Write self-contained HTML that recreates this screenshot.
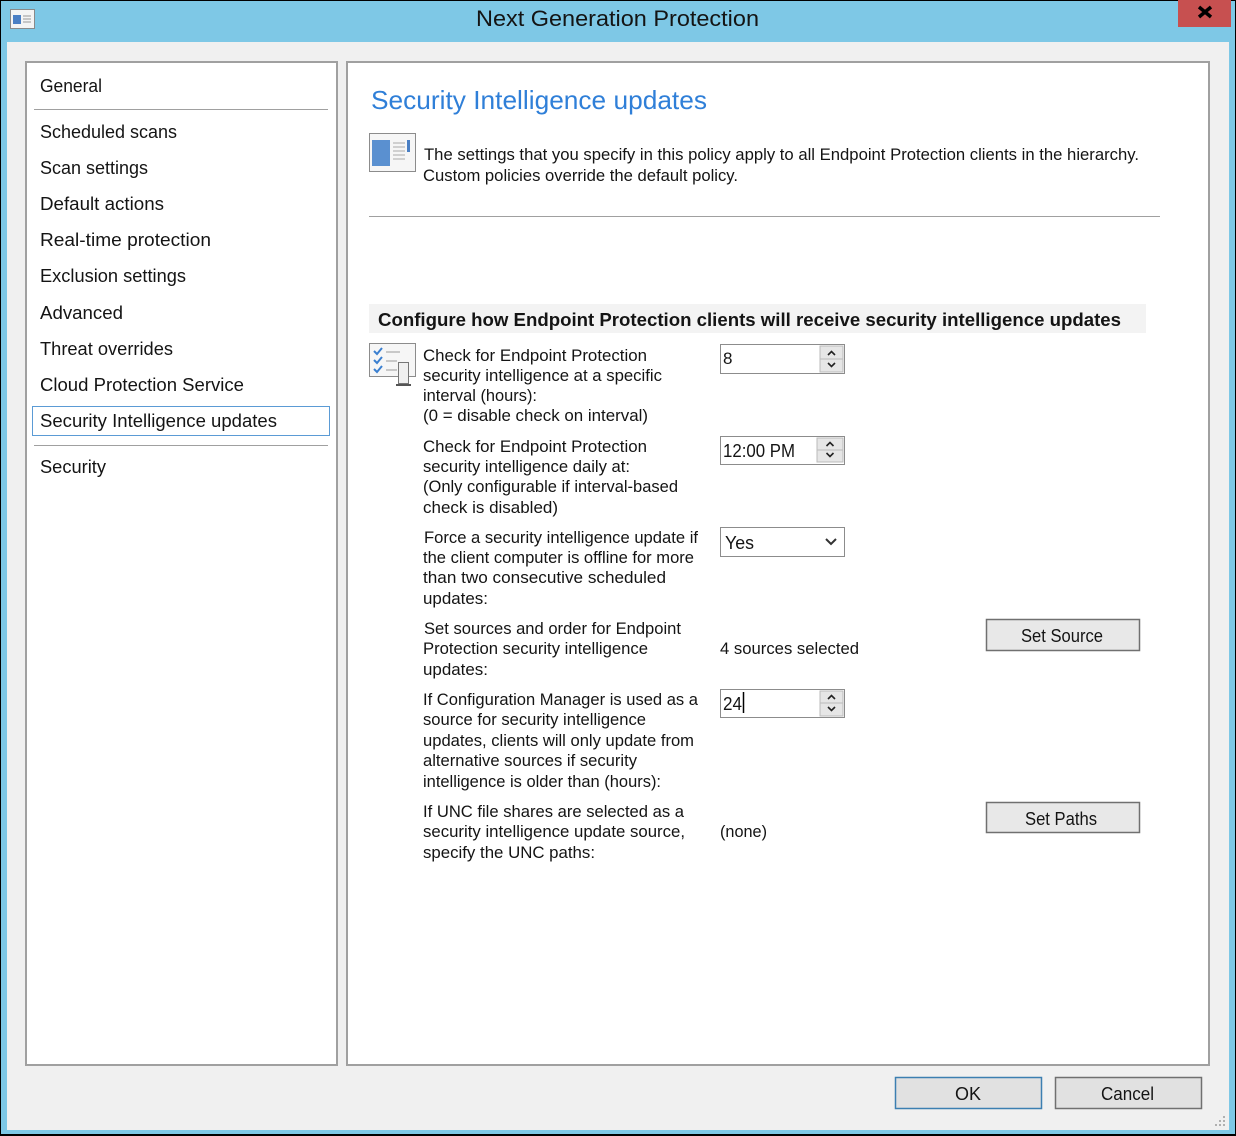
<!DOCTYPE html>
<html><head><meta charset="utf-8"><style>html,body{margin:0;padding:0;background:#000}svg{display:block}text{font-family:"Liberation Sans",sans-serif;fill:#141414}</style></head><body>
<svg width="1236" height="1136" viewBox="0 0 1236 1136" xmlns="http://www.w3.org/2000/svg">
<rect x="0" y="0" width="1236" height="1136" fill="#000"/>
<rect x="1" y="1" width="1234" height="1133" fill="#7ec8e6"/>
<rect x="7" y="42" width="1222" height="1088" fill="#f0f0f0"/>
<rect x="10.5" y="9.5" width="24" height="19" fill="#f4f4f4" stroke="#8a8a8a"/>
<rect x="13" y="15" width="8" height="9" fill="#4a7fc4"/>
<line x1="23" y1="16" x2="31" y2="16" stroke="#999"/><line x1="23" y1="19" x2="31" y2="19" stroke="#999"/><line x1="23" y1="22" x2="31" y2="22" stroke="#999"/>
<text x="476" y="26" font-size="22" textLength="283" lengthAdjust="spacingAndGlyphs">Next Generation Protection</text>
<rect x="1178" y="0" width="53" height="27" fill="#c75050"/>
<path d="M1199 7 L1211 17 M1211 7 L1199 17" stroke="#000" stroke-width="3.5"/>
<rect x="26" y="62" width="311" height="1003" fill="#fff" stroke="#a0a0a0" stroke-width="2"/>
<rect x="347" y="62" width="862" height="1003" fill="#fff" stroke="#a0a0a0" stroke-width="2"/>
<g font-size="18">
<text x="40" y="92" textLength="62" lengthAdjust="spacingAndGlyphs">General</text>
<line x1="34" y1="109.5" x2="328" y2="109.5" stroke="#a0a0a0"/>
<text x="40" y="138" textLength="137" lengthAdjust="spacingAndGlyphs">Scheduled scans</text>
<text x="40" y="174" textLength="108" lengthAdjust="spacingAndGlyphs">Scan settings</text>
<text x="40" y="210" textLength="124" lengthAdjust="spacingAndGlyphs">Default actions</text>
<text x="40" y="246" textLength="171" lengthAdjust="spacingAndGlyphs">Real-time protection</text>
<text x="40" y="282" textLength="146" lengthAdjust="spacingAndGlyphs">Exclusion settings</text>
<text x="40" y="319" textLength="83" lengthAdjust="spacingAndGlyphs">Advanced</text>
<text x="40" y="355" textLength="133" lengthAdjust="spacingAndGlyphs">Threat overrides</text>
<text x="40" y="391" textLength="204" lengthAdjust="spacingAndGlyphs">Cloud Protection Service</text>
<rect x="32.5" y="406.5" width="297" height="29" fill="none" stroke="#5b9bd5"/>
<text x="40" y="427" textLength="237" lengthAdjust="spacingAndGlyphs">Security Intelligence updates</text>
<line x1="34" y1="445.5" x2="328" y2="445.5" stroke="#a0a0a0"/>
<text x="40" y="473" textLength="66" lengthAdjust="spacingAndGlyphs">Security</text>
</g>
<text x="371" y="109" font-size="26" style="fill:#2f7fd8" textLength="336" lengthAdjust="spacingAndGlyphs">Security Intelligence updates</text>
<rect x="369.5" y="133.5" width="46" height="38" fill="#f6f6f6" stroke="#8c8c8c"/>
<rect x="372" y="140" width="18" height="26" fill="#5a90d0"/>
<g stroke="#aaa"><line x1="393" y1="143" x2="405" y2="143"/><line x1="393" y1="147" x2="405" y2="147"/><line x1="393" y1="151" x2="405" y2="151"/><line x1="393" y1="155" x2="405" y2="155"/><line x1="393" y1="159" x2="405" y2="159"/></g>
<rect x="407" y="140" width="3" height="12" fill="#4a7fc4"/>
<g font-size="17">
<text x="424" y="160" textLength="715" lengthAdjust="spacingAndGlyphs">The settings that you specify in this policy apply to all Endpoint Protection clients in the hierarchy.</text>
<text x="423" y="181" textLength="315" lengthAdjust="spacingAndGlyphs">Custom policies override the default policy.</text>
</g>
<line x1="369" y1="216.5" x2="1160" y2="216.5" stroke="#a0a0a0"/>
<rect x="369" y="304" width="777" height="29" fill="#f3f3f3"/>
<text x="378" y="326" font-size="18" font-weight="bold" textLength="743" lengthAdjust="spacingAndGlyphs">Configure how Endpoint Protection clients will receive security intelligence updates</text>
<rect x="369.5" y="343.5" width="46" height="33" fill="#f6f6f6" stroke="#8c8c8c"/>
<path d="M374 351 l3 3 l5 -6 M374 360 l3 3 l5 -6 M374 369 l3 3 l5 -6" stroke="#3a7fd0" stroke-width="2" fill="none"/>
<g stroke="#999"><line x1="386" y1="352" x2="400" y2="352"/><line x1="386" y1="361" x2="397" y2="361"/><line x1="386" y1="370" x2="397" y2="370"/></g>
<rect x="398.5" y="362.5" width="10" height="21" fill="#f0f0f0" stroke="#777"/>
<line x1="396" y1="385" x2="411" y2="385" stroke="#555" stroke-width="2"/>
<g font-size="17">
<text x="423" y="361" textLength="224" lengthAdjust="spacingAndGlyphs">Check for Endpoint Protection</text>
<text x="423" y="381" textLength="239" lengthAdjust="spacingAndGlyphs">security intelligence at a specific</text>
<text x="423" y="401" textLength="114" lengthAdjust="spacingAndGlyphs">interval (hours):</text>
<text x="423" y="421" textLength="225" lengthAdjust="spacingAndGlyphs">(0 = disable check on interval)</text>
<text x="423" y="452" textLength="224" lengthAdjust="spacingAndGlyphs">Check for Endpoint Protection</text>
<text x="423" y="472" textLength="207" lengthAdjust="spacingAndGlyphs">security intelligence daily at:</text>
<text x="423" y="492" textLength="255" lengthAdjust="spacingAndGlyphs">(Only configurable if interval-based</text>
<text x="423" y="513" textLength="135" lengthAdjust="spacingAndGlyphs">check is disabled)</text>
<text x="424" y="543" textLength="274" lengthAdjust="spacingAndGlyphs">Force a security intelligence update if</text>
<text x="423" y="563" textLength="271" lengthAdjust="spacingAndGlyphs">the client computer is offline for more</text>
<text x="423" y="583" textLength="243" lengthAdjust="spacingAndGlyphs">than two consecutive scheduled</text>
<text x="423" y="604" textLength="65" lengthAdjust="spacingAndGlyphs">updates:</text>
<text x="424" y="634" textLength="257" lengthAdjust="spacingAndGlyphs">Set sources and order for Endpoint</text>
<text x="423" y="654" textLength="225" lengthAdjust="spacingAndGlyphs">Protection security intelligence</text>
<text x="423" y="675" textLength="65" lengthAdjust="spacingAndGlyphs">updates:</text>
<text x="720" y="654" textLength="139" lengthAdjust="spacingAndGlyphs">4 sources selected</text>
<text x="423" y="705" textLength="275" lengthAdjust="spacingAndGlyphs">If Configuration Manager is used as a</text>
<text x="423" y="725" textLength="223" lengthAdjust="spacingAndGlyphs">source for security intelligence</text>
<text x="423" y="746" textLength="271" lengthAdjust="spacingAndGlyphs">updates, clients will only update from</text>
<text x="423" y="766" textLength="214" lengthAdjust="spacingAndGlyphs">alternative sources if security</text>
<text x="423" y="787" textLength="238" lengthAdjust="spacingAndGlyphs">intelligence is older than (hours):</text>
<text x="423" y="817" textLength="261" lengthAdjust="spacingAndGlyphs">If UNC file shares are selected as a</text>
<text x="423" y="837" textLength="262" lengthAdjust="spacingAndGlyphs">security intelligence update source,</text>
<text x="423" y="858" textLength="172" lengthAdjust="spacingAndGlyphs">specify the UNC paths:</text>
<text x="720" y="837" textLength="47" lengthAdjust="spacingAndGlyphs">(none)</text>
</g>
<g>
<rect x="720.5" y="344.5" width="124" height="29" fill="#fff" stroke="#8c8c8c"/>
<rect x="820" y="346" width="23" height="13" fill="#e6e6e6" stroke="#bbb"/><rect x="820" y="359" width="23" height="13" fill="#e6e6e6" stroke="#bbb"/>
<path d="M828 355 l3.5 -3.5 l3.5 3.5 M828 363 l3.5 3.5 l3.5 -3.5" stroke="#222" stroke-width="1.6" fill="none"/>
<text x="723" y="364" font-size="17">8</text>
</g>
<g>
<rect x="720.5" y="436.5" width="124" height="28" fill="#fff" stroke="#8c8c8c"/>
<rect x="817" y="438" width="26" height="12" fill="#e6e6e6" stroke="#bbb"/><rect x="817" y="450" width="26" height="12" fill="#e6e6e6" stroke="#bbb"/>
<path d="M826.5 446 l3.5 -3.5 l3.5 3.5 M826.5 453 l3.5 3.5 l3.5 -3.5" stroke="#222" stroke-width="1.6" fill="none"/>
<text x="723" y="457" font-size="18" textLength="72" lengthAdjust="spacingAndGlyphs">12:00 PM</text>
</g>
<g>
<rect x="720.5" y="527.5" width="124" height="29" fill="#fff" stroke="#8c8c8c"/>
<text x="725" y="549" font-size="18" textLength="29" lengthAdjust="spacingAndGlyphs">Yes</text>
<path d="M826 539 l5 5 l5 -5" stroke="#333" stroke-width="2" fill="none"/>
</g>
<g>
<rect x="720.5" y="689.5" width="124" height="28" fill="#fff" stroke="#8c8c8c"/>
<rect x="820" y="691" width="23" height="12" fill="#e6e6e6" stroke="#bbb"/><rect x="820" y="703" width="23" height="13" fill="#e6e6e6" stroke="#bbb"/>
<path d="M828 699 l3.5 -3.5 l3.5 3.5 M828 707 l3.5 3.5 l3.5 -3.5" stroke="#222" stroke-width="1.6" fill="none"/>
<text x="723" y="710" font-size="18" textLength="19" lengthAdjust="spacingAndGlyphs">24</text>
<line x1="743.5" y1="692" x2="743.5" y2="713" stroke="#000" stroke-width="1.5"/>
</g>
<rect x="986.5" y="619.5" width="153" height="31" fill="#e8e8e8" stroke="#707070" stroke-width="1.5"/>
<text x="1021" y="642" font-size="18" textLength="82" lengthAdjust="spacingAndGlyphs">Set Source</text>
<rect x="986.5" y="802.5" width="153" height="30" fill="#e8e8e8" stroke="#707070" stroke-width="1.5"/>
<text x="1025" y="825" font-size="18" textLength="72" lengthAdjust="spacingAndGlyphs">Set Paths</text>
<rect x="895.5" y="1077.5" width="146" height="31" fill="#e1e1e1" stroke="#3c7fb1" stroke-width="1.5"/>
<text x="955" y="1100" font-size="18" textLength="26" lengthAdjust="spacingAndGlyphs">OK</text>
<rect x="1055.5" y="1077.5" width="146" height="31" fill="#e1e1e1" stroke="#707070" stroke-width="1.5"/>
<text x="1101" y="1100" font-size="18" textLength="53" lengthAdjust="spacingAndGlyphs">Cancel</text>
<g fill="#b0b0b0"><rect x="1223" y="1116" width="2" height="2"/><rect x="1219" y="1120" width="2" height="2"/><rect x="1223" y="1120" width="2" height="2"/><rect x="1215" y="1124" width="2" height="2"/><rect x="1219" y="1124" width="2" height="2"/><rect x="1223" y="1124" width="2" height="2"/></g>
</svg>
</body></html>
